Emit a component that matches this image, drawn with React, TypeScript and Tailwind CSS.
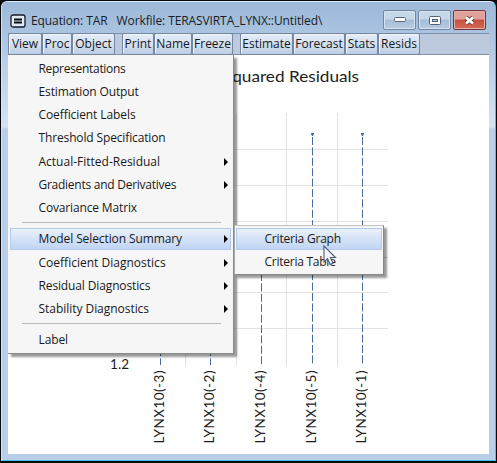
import type { ReactNode } from "react";

type Entry = { label: string; track: string; sub?: boolean; active?: boolean } | null;

const MENU: Entry[] = [
  { label: "Representations", track: "tracking-[-0.3px]" },
  { label: "Estimation Output", track: "tracking-[-0.13px]" },
  { label: "Coefficient Labels", track: "tracking-[-0.09px]" },
  { label: "Threshold Specification", track: "tracking-[-0.14px]" },
  { label: "Actual-Fitted-Residual", track: "tracking-[0px]", sub: true },
  { label: "Gradients and Derivatives", track: "tracking-[-0.26px]", sub: true },
  { label: "Covariance Matrix", track: "tracking-[-0.15px]" },
  null,
  { label: "Model Selection Summary", track: "tracking-[-0.1px]", sub: true, active: true },
  { label: "Coefficient Diagnostics", track: "tracking-[0.01px]", sub: true },
  { label: "Residual Diagnostics", track: "tracking-[-0.13px]", sub: true },
  { label: "Stability Diagnostics", track: "tracking-[-0.04px]", sub: true },
  null,
  { label: "Label", track: "tracking-[-0.1px]" },
];

const STEMS = [
  { x: 160.5, top: 345, label: "LYNX10(-3)" },
  { x: 210.5, top: 345, label: "LYNX10(-2)" },
  { x: 261.5, top: 270, label: "LYNX10(-4)" },
  { x: 312.5, top: 134, label: "LYNX10(-5)" },
  { x: 362.5, top: 134, label: "LYNX10(-1)" },
];

const HIGHLIGHT = "border-[#b3caeb] bg-linear-to-b from-[#eaf1fb] to-[#c0d5f3]";

function ToolButton({ label, width }: { label: string; width: string }) {
  return (
    <button
      className={`${width} flex h-[22px] shrink-0 items-center justify-center rounded-[2px] border border-[#75879f] bg-linear-to-b from-[#e4ecf7] via-[#d6e1f0] to-[#bdcde3] text-[12px] leading-none whitespace-nowrap text-[#14171d] shadow-[inset_1px_1px_0_#eef4fc]`}
    >
      {label}
    </button>
  );
}

function CaptionButton({ children, red }: { children: ReactNode; red?: boolean }) {
  return (
    <button
      className={`flex h-[20px] w-[33px] items-center justify-center rounded-[2px] border ${
        red
          ? "border-[#6e3540] bg-linear-to-b from-[#dfa29b] from-45% via-[#c9503f] via-50% to-[#d46c56] shadow-[inset_0_0_0_1px_#e7b0a8]"
          : "border-[#71869f] bg-linear-to-b from-[#c5d7e9] from-45% via-[#a5bdd6] via-50% to-[#b5cce3] shadow-[inset_0_0_0_1px_#d6e4f2]"
      }`}
    >
      {children}
    </button>
  );
}

function MenuRow({ entry }: { entry: Entry }) {
  if (!entry)
    return (
      <div className="mr-[10px] ml-[12px] h-[8.4px] pt-[3px]">
        <div className="h-px bg-[#b9b9b9]" />
      </div>
    );
  return (
    <div className="h-[23.15px] pt-px">
      <div
        className={`flex h-[22px] items-center justify-between border pr-[2px] pl-[27.5px] ${
          entry.active ? HIGHLIGHT : "border-transparent"
        }`}
      >
        <span className={entry.track}>{entry.label}</span>
        {entry.sub && (
          <svg width="4" height="8" viewBox="0 0 4 8">
            <path d="M0 0L4 4L0 8Z" fill="#000" />
          </svg>
        )}
      </div>
    </div>
  );
}

function Chart() {
  return (
    <svg
      width="481"
      height="399"
      viewBox="8 55 481 399"
      className="block font-[Lato,'Open_Sans',sans-serif]"
    >
      <text x="359" y="82" textAnchor="end" fontSize="16" fill="#222" textLength="193" lengthAdjust="spacingAndGlyphs">
        Sum of Squared Residuals
      </text>
      <g stroke="#e2e2e4" strokeWidth="1">
        {[149.5, 185.5, 221.5, 257.5, 292.5, 328.5].map((y) => (
          <line key={y} x1="135" x2="388" y1={y} y2={y} />
        ))}
        {[185.5, 236.5, 286.5, 337.5].map((x) => (
          <line key={x} x1={x} x2={x} y1="113" y2="366" />
        ))}
      </g>
      {STEMS.map((s) => (
        <g key={s.label}>
          <line x1={s.x} x2={s.x} y1={s.top + 3} y2="365" stroke="#4a6b9d" strokeDasharray="8 2.4" />
          <path d={`M${s.x - 1.5} ${s.top - 1}h3v1l-1 2h-1l-1-2z`} fill="#4a6b9d" />
          <text
            transform={`translate(${s.x + 3.5} 443.5) rotate(-90)`}
            fontSize="13.5"
            fill="#1c1c1c"
            textLength="73"
            lengthAdjust="spacing"
          >
            {s.label}
          </text>
        </g>
      ))}
      <text x="110" y="368.5" fontSize="13.5" fill="#1c1c1c" textLength="19">1.2</text>
    </svg>
  );
}

export default function App() {
  return (
    <div className="relative h-[463px] w-[497px] overflow-hidden bg-[#05080c] pt-px pr-px pb-[2px] pl-px font-['Open_Sans','Noto_Sans',sans-serif]">
      <div className="flex h-[460px] flex-col rounded-t-[6px] border border-t-[#dcecfa] border-r-[#44c6e4] border-b-[#44c6e4] border-l-[#d5e5f5] bg-[linear-gradient(to_bottom,#9db9d8_0px,#a9c3e0_30px,#b9cee8_60px,#d5e2f4_125px,#b9cee9_127px)] px-[6px] pb-[7px]">
        <header className="flex h-[31px] shrink-0 items-center pl-[2px]">
          <svg width="16" height="14" viewBox="0 0 16 14" className="mt-[6px]">
            <rect x="1" y="1" width="14" height="12" rx="2" fill="#e1eaf5" stroke="#141b2a" strokeWidth="1.3" />
            <path d="M4 5.5h8M4 8.5h8" stroke="#070d18" strokeWidth="2" />
          </svg>
          <h1 className="mt-[7px] ml-[5px] flex-1 text-[12px] leading-none tracking-[-0.1px] whitespace-pre text-[#171d26]">
            {"Equation: TAR   Workfile: TERASVIRTA_LYNX::Untitled\\"}
          </h1>
          <div className="mt-[5px] flex gap-[2px] pr-[3px]">
            <CaptionButton>
              <svg width="12" height="6">
                <rect x=".5" y=".5" width="11" height="4" rx="1" fill="#fff" stroke="#53657c" />
              </svg>
            </CaptionButton>
            <CaptionButton>
              <svg width="12" height="9">
                <rect x=".5" y=".5" width="11" height="8" rx="1" fill="#fff" stroke="#53657c" />
                <rect x="3.5" y="3.5" width="5" height="2" fill="#aebfd4" stroke="#53657c" />
              </svg>
            </CaptionButton>
            <CaptionButton red>
              <svg width="13" height="11" viewBox="0 0 13 11">
                <path d="M3 2.5L10 8.5M10 2.5L3 8.5" stroke="#6a3c43" strokeWidth="4.4" />
                <path d="M3 2.5L10 8.5M10 2.5L3 8.5" stroke="#fff" strokeWidth="2.7" />
              </svg>
            </CaptionButton>
          </div>
        </header>

        <nav className="flex h-[22px] shrink-0 items-start border-t border-b border-t-[#7d91ab] border-b-[#8190a6] bg-[#bdcade]">
          <div className="-mt-px flex w-[114px]">
            <ToolButton label="View" width="w-[34px]" />
            <ToolButton label="Proc" width="w-[30px]" />
            <ToolButton label="Object" width="w-[43px]" />
          </div>
          <div className="-mt-px flex w-[118px]">
            <ToolButton label="Print" width="w-[32px]" />
            <ToolButton label="Name" width="w-[38px]" />
            <ToolButton label="Freeze" width="w-[41px]" />
          </div>
          <div className="-mt-px flex">
            <ToolButton label="Estimate" width="w-[53px]" />
            <ToolButton label="Forecast" width="w-[52px]" />
            <ToolButton label="Stats" width="w-[33px]" />
            <ToolButton label="Resids" width="w-[42px]" />
          </div>
        </nav>

        <main className="h-[399px] w-[481px] shrink-0 bg-white">
          <Chart />
        </main>
      </div>

      <div className="absolute top-[55px] left-[8px] h-[299px] w-[226px] border-r border-b border-[#8a8a8a] bg-[#f6f6f6] pt-[2px] pr-[2px] pl-[2px] text-[12px] leading-none whitespace-nowrap text-[#191919] shadow-[3px_3px_2px_#00000066]">
        {MENU.map((entry, i) => (
          <MenuRow key={i} entry={entry} />
        ))}
      </div>

      <div className="absolute top-[225px] left-[234px] h-[50px] w-[150px] border border-t-[#c4c4c4] border-r-[#888] border-b-[#888] border-l-[#aaa] bg-[#f6f6f6] p-[1px] text-[12px] leading-none whitespace-nowrap text-[#191919] shadow-[3px_3px_2px_#00000066]">
        <MenuRow entry={{ label: "Criteria Graph", track: "tracking-[-0.2px]", active: true }} />
        <MenuRow entry={{ label: "Criteria Table", track: "tracking-[-0.25px]" }} />
      </div>

      <svg className="absolute top-[245px] left-[323px]" width="14" height="21" viewBox="0 0 14 21">
        <path d="M1 1V17L4.6 13.6L7.2 19.5L10 18.2L7.4 12.5H12.5Z" fill="#f6f7fb" stroke="#4f5878" strokeWidth="1.1" />
      </svg>
    </div>
  );
}
